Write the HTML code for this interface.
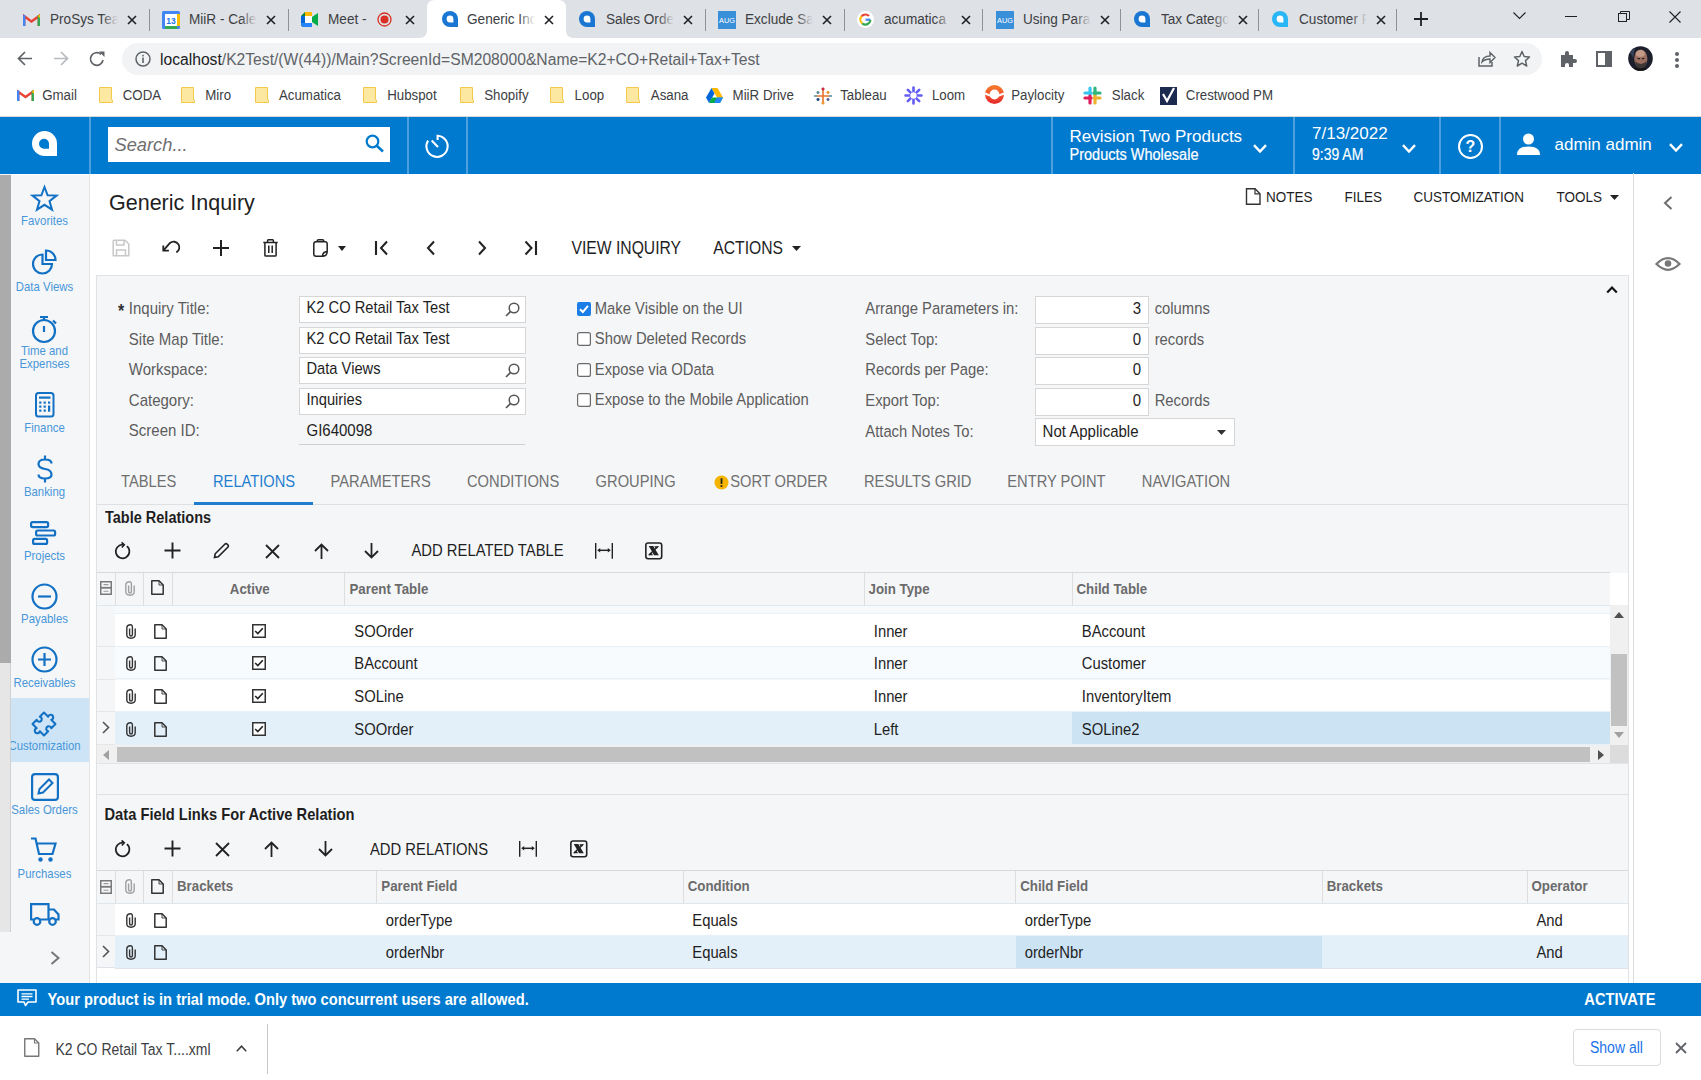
<!DOCTYPE html><html><head><meta charset="utf-8"><style>
html,body{margin:0;padding:0;}
body{width:1701px;height:1080px;overflow:hidden;position:relative;background:#fff;font-family:"Liberation Sans",sans-serif;}
.t{position:absolute;white-space:nowrap;line-height:1;}
.r{position:absolute;}
svg.r{overflow:visible;}
</style></head><body>
<div class="r" style="left:0px;top:0px;width:1701px;height:38px;background:#dee1e6;"></div>
<svg class="r" style="left:419px;top:0px;" width="155" height="38" viewBox="0 0 155 38"><path d="M0 38 Q8 38 8 30 V8 Q8 0 16 0 H139 Q147 0 147 8 V30 Q147 38 155 38 Z" fill="#fff"/></svg>
<div class="r" style="left:0px;top:38px;width:1701px;height:78px;background:#fff;"></div>
<svg class="r" style="left:23px;top:13px;" width="17" height="13" viewBox="0 0 17 13"><path d="M1.2 13V3.2L8.5 8.5L15.8 3.2V13" fill="none" stroke="#ea4335" stroke-width="2.4"/><rect x="0" y="2" width="2.4" height="11" fill="#4285f4"/><rect x="14.6" y="2" width="2.4" height="11" fill="#34a853"/><path d="M14.6 3 L17 1.5 V5 Z" fill="#fbbc04"/></svg>
<div class="r" style="left:50px;top:8px;width:68px;height:22px;overflow:hidden;"><div class="t" style="left:0;top:5.49px;font-size:13.6px;color:#3c4043;transform:scaleY(1.12);transform-origin:0 11.5px;">ProSys Tear</div><div class="r" style="right:0;top:0;width:16px;height:22px;background:linear-gradient(to right, rgba(0,0,0,0), #dee1e6);"></div></div>
<svg class="r" style="left:127px;top:15px;" width="10" height="10" viewBox="0 0 10 10"><path d="M1 1L9 9M9 1L1 9" stroke="#202124" stroke-width="1.6"/></svg>
<svg class="r" style="left:162px;top:11px;" width="18" height="18" viewBox="0 0 18 18"><rect x="0" y="0" width="18" height="18" rx="1.5" fill="#4285f4"/><rect x="3" y="3" width="12" height="12" fill="#fff"/><rect x="15" y="3" width="3" height="12" fill="#fbbc04"/><rect x="3" y="15" width="12" height="3" fill="#34a853"/><text x="9" y="13" font-size="8.5" font-family="Liberation Sans" text-anchor="middle" fill="#1a73e8" font-weight="700">13</text></svg>
<div class="r" style="left:189px;top:8px;width:68px;height:22px;overflow:hidden;"><div class="t" style="left:0;top:5.49px;font-size:13.6px;color:#3c4043;transform:scaleY(1.12);transform-origin:0 11.5px;">MiiR - Cale</div><div class="r" style="right:0;top:0;width:16px;height:22px;background:linear-gradient(to right, rgba(0,0,0,0), #dee1e6);"></div></div>
<svg class="r" style="left:266px;top:15px;" width="10" height="10" viewBox="0 0 10 10"><path d="M1 1L9 9M9 1L1 9" stroke="#202124" stroke-width="1.6"/></svg>
<svg class="r" style="left:301px;top:12px;" width="17" height="15" viewBox="0 0 17 15"><path d="M0 4 L4 0 H11 V15 H3 Q0 15 0 12 Z" fill="#00832d"/><rect x="0" y="4" width="4" height="7" fill="#0066da"/><path d="M4 0 H11 V4 H4 Z" fill="#ffba00"/><path d="M0 11 V12 Q0 15 3 15 H11 V11 Z" fill="#2684fc"/><path d="M4 4 H11 V11 H4 Z" fill="#fff"/><path d="M11 5 L17 1 V14 L11 10 Z" fill="#00ac47"/></svg>
<div class="r" style="left:328px;top:8px;width:68px;height:22px;overflow:hidden;"><div class="t" style="left:0;top:5.49px;font-size:13.6px;color:#3c4043;transform:scaleY(1.12);transform-origin:0 11.5px;">Meet -</div><div class="r" style="right:0;top:0;width:16px;height:22px;background:linear-gradient(to right, rgba(0,0,0,0), #dee1e6);"></div></div>
<svg class="r" style="left:405px;top:15px;" width="10" height="10" viewBox="0 0 10 10"><path d="M1 1L9 9M9 1L1 9" stroke="#202124" stroke-width="1.6"/></svg>
<svg class="r" style="left:377px;top:12px;" width="15" height="15" viewBox="0 0 15 15"><circle cx="7.5" cy="7.5" r="6.5" fill="none" stroke="#d93025" stroke-width="1.3"/><circle cx="7.5" cy="7.5" r="4" fill="#d93025"/></svg>
<svg class="r" style="left:441.5px;top:11px;" width="16" height="16" viewBox="0 0 16 16"><path d="M8 0 A8 8 0 0 0 0 8 A8 8 0 0 0 8 16 H16 V8 A8 8 0 0 0 8 0 Z" fill="#1976d2"/><path d="M8 4.6 A3.4 3.4 0 0 0 8 11.4 H11.4 V8 A3.4 3.4 0 0 0 8 4.6 Z" fill="#fff"/></svg>
<div class="r" style="left:467px;top:8px;width:68px;height:22px;overflow:hidden;"><div class="t" style="left:0;top:5.49px;font-size:13.6px;color:#3c4043;transform:scaleY(1.12);transform-origin:0 11.5px;">Generic Inq</div><div class="r" style="right:0;top:0;width:16px;height:22px;background:linear-gradient(to right, rgba(0,0,0,0), #fff);"></div></div>
<svg class="r" style="left:544px;top:15px;" width="10" height="10" viewBox="0 0 10 10"><path d="M1 1L9 9M9 1L1 9" stroke="#202124" stroke-width="1.6"/></svg>
<svg class="r" style="left:579px;top:11px;" width="16" height="16" viewBox="0 0 16 16"><path d="M8 0 A8 8 0 0 0 0 8 A8 8 0 0 0 8 16 H16 V8 A8 8 0 0 0 8 0 Z" fill="#1976d2"/><path d="M8 4.6 A3.4 3.4 0 0 0 8 11.4 H11.4 V8 A3.4 3.4 0 0 0 8 4.6 Z" fill="#fff"/></svg>
<div class="r" style="left:606px;top:8px;width:68px;height:22px;overflow:hidden;"><div class="t" style="left:0;top:5.49px;font-size:13.6px;color:#3c4043;transform:scaleY(1.12);transform-origin:0 11.5px;">Sales Order</div><div class="r" style="right:0;top:0;width:16px;height:22px;background:linear-gradient(to right, rgba(0,0,0,0), #dee1e6);"></div></div>
<svg class="r" style="left:683px;top:15px;" width="10" height="10" viewBox="0 0 10 10"><path d="M1 1L9 9M9 1L1 9" stroke="#202124" stroke-width="1.6"/></svg>
<svg class="r" style="left:718px;top:11px;" width="18" height="18" viewBox="0 0 18 18"><rect width="18" height="18" fill="#3a8fd9"/><text x="1" y="12" font-size="8" font-family="Liberation Sans" fill="#fff" textLength="16" lengthAdjust="spacingAndGlyphs">AUG</text></svg>
<div class="r" style="left:745px;top:8px;width:68px;height:22px;overflow:hidden;"><div class="t" style="left:0;top:5.49px;font-size:13.6px;color:#3c4043;transform:scaleY(1.12);transform-origin:0 11.5px;">Exclude Sal</div><div class="r" style="right:0;top:0;width:16px;height:22px;background:linear-gradient(to right, rgba(0,0,0,0), #dee1e6);"></div></div>
<svg class="r" style="left:822px;top:15px;" width="10" height="10" viewBox="0 0 10 10"><path d="M1 1L9 9M9 1L1 9" stroke="#202124" stroke-width="1.6"/></svg>
<svg class="r" style="left:857px;top:11px;" width="17" height="17" viewBox="0 0 17 17"><circle cx="8.5" cy="8.5" r="8.5" fill="#fff"/><path d="M13.5 8.7 H8.6" stroke="#4285f4" stroke-width="2.2"/><path d="M13.4 9 A5 5 0 0 1 5.2 12.3" fill="none" stroke="#34a853" stroke-width="2.2"/><path d="M5.2 12.3 A5 5 0 0 1 4.6 5.3" fill="none" stroke="#fbbc04" stroke-width="2.2"/><path d="M4.6 5.3 A5 5 0 0 1 12 5" fill="none" stroke="#ea4335" stroke-width="2.2"/></svg>
<div class="r" style="left:884px;top:8px;width:68px;height:22px;overflow:hidden;"><div class="t" style="left:0;top:5.49px;font-size:13.6px;color:#3c4043;transform:scaleY(1.12);transform-origin:0 11.5px;">acumatica</div><div class="r" style="right:0;top:0;width:16px;height:22px;background:linear-gradient(to right, rgba(0,0,0,0), #dee1e6);"></div></div>
<svg class="r" style="left:961px;top:15px;" width="10" height="10" viewBox="0 0 10 10"><path d="M1 1L9 9M9 1L1 9" stroke="#202124" stroke-width="1.6"/></svg>
<svg class="r" style="left:996px;top:11px;" width="18" height="18" viewBox="0 0 18 18"><rect width="18" height="18" fill="#3a8fd9"/><text x="1" y="12" font-size="8" font-family="Liberation Sans" fill="#fff" textLength="16" lengthAdjust="spacingAndGlyphs">AUG</text></svg>
<div class="r" style="left:1023px;top:8px;width:68px;height:22px;overflow:hidden;"><div class="t" style="left:0;top:5.49px;font-size:13.6px;color:#3c4043;transform:scaleY(1.12);transform-origin:0 11.5px;">Using Para</div><div class="r" style="right:0;top:0;width:16px;height:22px;background:linear-gradient(to right, rgba(0,0,0,0), #dee1e6);"></div></div>
<svg class="r" style="left:1100px;top:15px;" width="10" height="10" viewBox="0 0 10 10"><path d="M1 1L9 9M9 1L1 9" stroke="#202124" stroke-width="1.6"/></svg>
<svg class="r" style="left:1134px;top:11px;" width="16" height="16" viewBox="0 0 16 16"><path d="M8 0 A8 8 0 0 0 0 8 A8 8 0 0 0 8 16 H16 V8 A8 8 0 0 0 8 0 Z" fill="#1976d2"/><path d="M8 4.6 A3.4 3.4 0 0 0 8 11.4 H11.4 V8 A3.4 3.4 0 0 0 8 4.6 Z" fill="#fff"/></svg>
<div class="r" style="left:1161px;top:8px;width:68px;height:22px;overflow:hidden;"><div class="t" style="left:0;top:5.49px;font-size:13.6px;color:#3c4043;transform:scaleY(1.12);transform-origin:0 11.5px;">Tax Catego</div><div class="r" style="right:0;top:0;width:16px;height:22px;background:linear-gradient(to right, rgba(0,0,0,0), #dee1e6);"></div></div>
<svg class="r" style="left:1238px;top:15px;" width="10" height="10" viewBox="0 0 10 10"><path d="M1 1L9 9M9 1L1 9" stroke="#202124" stroke-width="1.6"/></svg>
<svg class="r" style="left:1272px;top:11px;" width="16" height="16" viewBox="0 0 16 16"><path d="M8 0 A8 8 0 0 0 0 8 A8 8 0 0 0 8 16 H16 V8 A8 8 0 0 0 8 0 Z" fill="#29b6f6"/><path d="M8 4.6 A3.4 3.4 0 0 0 8 11.4 H11.4 V8 A3.4 3.4 0 0 0 8 4.6 Z" fill="#fff"/></svg>
<div class="r" style="left:1299px;top:8px;width:68px;height:22px;overflow:hidden;"><div class="t" style="left:0;top:5.49px;font-size:13.6px;color:#3c4043;transform:scaleY(1.12);transform-origin:0 11.5px;">Customer F</div><div class="r" style="right:0;top:0;width:16px;height:22px;background:linear-gradient(to right, rgba(0,0,0,0), #dee1e6);"></div></div>
<svg class="r" style="left:1376px;top:15px;" width="10" height="10" viewBox="0 0 10 10"><path d="M1 1L9 9M9 1L1 9" stroke="#202124" stroke-width="1.6"/></svg>
<div class="r" style="left:149px;top:9px;width:1px;height:22px;background:#8e9196;"></div>
<div class="r" style="left:288px;top:9px;width:1px;height:22px;background:#8e9196;"></div>
<div class="r" style="left:705px;top:9px;width:1px;height:22px;background:#8e9196;"></div>
<div class="r" style="left:844px;top:9px;width:1px;height:22px;background:#8e9196;"></div>
<div class="r" style="left:982px;top:9px;width:1px;height:22px;background:#8e9196;"></div>
<div class="r" style="left:1120px;top:9px;width:1px;height:22px;background:#8e9196;"></div>
<div class="r" style="left:1258px;top:9px;width:1px;height:22px;background:#8e9196;"></div>
<div class="r" style="left:1396px;top:9px;width:1px;height:22px;background:#8e9196;"></div>
<svg class="r" style="left:1414px;top:12px;" width="14" height="14" viewBox="0 0 14 14"><path d="M7 0V14M0 7H14" stroke="#202124" stroke-width="1.8"/></svg>
<svg class="r" style="left:1513px;top:12px;" width="13" height="8" viewBox="0 0 13 8"><path d="M0.5 0.5L6.5 6.5L12.5 0.5" fill="none" stroke="#202124" stroke-width="1.1"/></svg>
<div class="r" style="left:1565px;top:16px;width:12px;height:1px;background:#202124;"></div>
<svg class="r" style="left:1618px;top:11px;" width="12" height="11" viewBox="0 0 12 11"><rect x="0.5" y="2.5" width="8" height="8" fill="none" stroke="#202124"/><path d="M2.5 2.5V0.5H11.5V8.5H8.5" fill="none" stroke="#202124"/></svg>
<svg class="r" style="left:1669px;top:11px;" width="12" height="12" viewBox="0 0 12 12"><path d="M0.5 0.5L11.5 11.5M11.5 0.5L0.5 11.5" stroke="#202124" stroke-width="1.1"/></svg>
<svg class="r" style="left:17px;top:51px;" width="16" height="15" viewBox="0 0 16 15"><path d="M15 7.5H2M8 1L1.5 7.5L8 14" fill="none" stroke="#5f6368" stroke-width="1.7"/></svg>
<svg class="r" style="left:53px;top:51px;" width="16" height="15" viewBox="0 0 16 15"><path d="M1 7.5H14M8 1L14.5 7.5L8 14" fill="none" stroke="#b7babf" stroke-width="1.7"/></svg>
<svg class="r" style="left:89px;top:51px;" width="17" height="16" viewBox="0 0 17 16"><path d="M14 9A6.3 6.3 0 1 1 12 3.3" fill="none" stroke="#5f6368" stroke-width="1.7"/><path d="M10 0.5H15.5V6Z" fill="#5f6368"/></svg>
<div class="r" style="left:122px;top:43px;width:1420px;height:32px;background:#f1f3f4;border-radius:16px;"></div>
<svg class="r" style="left:135px;top:51px;" width="16" height="16" viewBox="0 0 16 16"><circle cx="8" cy="8" r="7" fill="none" stroke="#5f6368" stroke-width="1.5"/><rect x="7.2" y="6.5" width="1.6" height="5.5" fill="#5f6368"/><rect x="7.2" y="3.8" width="1.6" height="1.6" fill="#5f6368"/></svg>
<div class="t" style="left:160px;top:51.74px;font-size:15.66px;color:#5f6368;transform:scaleY(1.1);transform-origin:0 13.26px;"><span style="color:#202124">localhost</span>/K2Test/(W(44))/Main?ScreenId=SM208000&amp;Name=K2+CO+Retail+Tax+Test</div>
<svg class="r" style="left:1478px;top:51px;" width="18" height="16" viewBox="0 0 18 16"><path d="M1 6V15H14V11" fill="none" stroke="#5f6368" stroke-width="1.5"/><path d="M4 11Q5 5 12 5V1.5L17 6.5L12 11.5V8Q7 8 4 11Z" fill="none" stroke="#5f6368" stroke-width="1.4"/></svg>
<svg class="r" style="left:1513px;top:50px;" width="18" height="18" viewBox="0 0 18 18"><path d="M9 1.5L11.2 6.5L16.5 7L12.5 10.6L13.7 16L9 13.2L4.3 16L5.5 10.6L1.5 7L6.8 6.5Z" fill="none" stroke="#5f6368" stroke-width="1.5" stroke-linejoin="round"/></svg>
<svg class="r" style="left:1559px;top:50px;" width="18" height="18" viewBox="0 0 18 18"><path d="M2 5H6V3A2 2 0 0 1 10 3V5H14V9H16A2 2 0 0 1 16 13H14V17H10V15A2 2 0 0 0 6 15V17H2Z" fill="#5f6368"/></svg>
<svg class="r" style="left:1596px;top:51px;" width="16" height="16" viewBox="0 0 16 16"><rect x="1" y="1" width="14" height="14" fill="none" stroke="#5f6368" stroke-width="2"/><rect x="9" y="1" width="6" height="14" fill="#5f6368"/></svg>
<svg class="r" style="left:1628px;top:46px;" width="25" height="25" viewBox="0 0 25 25"><defs><clipPath id="av"><circle cx="12.5" cy="12.5" r="12.3"/></clipPath></defs><g clip-path="url(#av)"><rect width="25" height="25" fill="#1b1f2b"/><path d="M2 6L7 2L5 12Z" fill="#4a5a78" opacity="0.6"/><ellipse cx="12.8" cy="12.8" rx="6.6" ry="9.2" fill="#9a6f60"/><ellipse cx="12.3" cy="7.5" rx="4.6" ry="3.6" fill="#c39a88"/><path d="M7 15Q8 22.5 12.8 23Q17.5 22.5 18.6 15Q16 18 12.8 18Q9.5 18 7 15Z" fill="#3d3634"/><rect x="9.5" y="12" width="2.5" height="1.2" fill="#2a2220"/><rect x="13.8" y="12" width="2.5" height="1.2" fill="#2a2220"/><path d="M3 25Q5 21 12.8 22.5Q20 21 22 25Z" fill="#141414"/></g></svg>
<div class="r" style="left:1674.5px;top:52px;width:4px;height:4px;border-radius:2px;background:#5f6368"></div>
<div class="r" style="left:1674.5px;top:58px;width:4px;height:4px;border-radius:2px;background:#5f6368"></div>
<div class="r" style="left:1674.5px;top:64px;width:4px;height:4px;border-radius:2px;background:#5f6368"></div>
<svg class="r" style="left:17px;top:89px;" width="17" height="12" viewBox="0 0 17 12"><path d="M1.2 12V2.8L8.5 8L15.8 2.8V12" fill="none" stroke="#ea4335" stroke-width="2.4"/><rect x="0" y="1.5" width="2.4" height="10.5" fill="#4285f4"/><rect x="14.6" y="1.5" width="2.4" height="10.5" fill="#34a853"/><path d="M14.6 2.5L17 1V5Z" fill="#fbbc04"/></svg>
<div class="t" style="left:42.20px;top:89.24px;font-size:13.3px;color:#3c4043;transform:scaleY(1.13);transform-origin:0 11.26px;">Gmail</div>
<div class="t" style="left:122.70px;top:89.24px;font-size:13.3px;color:#3c4043;transform:scaleY(1.13);transform-origin:0 11.26px;">CODA</div>
<div class="t" style="left:205.20px;top:89.24px;font-size:13.3px;color:#3c4043;transform:scaleY(1.13);transform-origin:0 11.26px;">Miro</div>
<div class="t" style="left:278.90px;top:89.24px;font-size:13.3px;color:#3c4043;transform:scaleY(1.13);transform-origin:0 11.26px;">Acumatica</div>
<div class="t" style="left:387.20px;top:89.24px;font-size:13.3px;color:#3c4043;transform:scaleY(1.13);transform-origin:0 11.26px;">Hubspot</div>
<div class="t" style="left:484.20px;top:89.24px;font-size:13.3px;color:#3c4043;transform:scaleY(1.13);transform-origin:0 11.26px;">Shopify</div>
<div class="t" style="left:574.60px;top:89.24px;font-size:13.3px;color:#3c4043;transform:scaleY(1.13);transform-origin:0 11.26px;">Loop</div>
<div class="t" style="left:650.80px;top:89.24px;font-size:13.3px;color:#3c4043;transform:scaleY(1.13);transform-origin:0 11.26px;">Asana</div>
<div class="t" style="left:732.60px;top:89.24px;font-size:13.3px;color:#3c4043;transform:scaleY(1.13);transform-origin:0 11.26px;">MiiR Drive</div>
<div class="t" style="left:840.20px;top:89.24px;font-size:13.3px;color:#3c4043;transform:scaleY(1.13);transform-origin:0 11.26px;">Tableau</div>
<div class="t" style="left:931.90px;top:89.24px;font-size:13.3px;color:#3c4043;transform:scaleY(1.13);transform-origin:0 11.26px;">Loom</div>
<div class="t" style="left:1011.20px;top:89.24px;font-size:13.3px;color:#3c4043;transform:scaleY(1.13);transform-origin:0 11.26px;">Paylocity</div>
<div class="t" style="left:1111.80px;top:89.24px;font-size:13.3px;color:#3c4043;transform:scaleY(1.13);transform-origin:0 11.26px;">Slack</div>
<div class="t" style="left:1185.80px;top:89.24px;font-size:13.3px;color:#3c4043;transform:scaleY(1.13);transform-origin:0 11.26px;">Crestwood PM</div>
<svg class="r" style="left:98.8px;top:87px;" width="14" height="16" viewBox="0 0 14 16"><path d="M0.5 0.5H12.5V12.5Q13.5 12.5 13.5 13.5V15.5H0.5Z" fill="#fce8a0" stroke="#f2c94c" stroke-width="1"/></svg>
<svg class="r" style="left:180.6px;top:87px;" width="14" height="16" viewBox="0 0 14 16"><path d="M0.5 0.5H12.5V12.5Q13.5 12.5 13.5 13.5V15.5H0.5Z" fill="#fce8a0" stroke="#f2c94c" stroke-width="1"/></svg>
<svg class="r" style="left:254.7px;top:87px;" width="14" height="16" viewBox="0 0 14 16"><path d="M0.5 0.5H12.5V12.5Q13.5 12.5 13.5 13.5V15.5H0.5Z" fill="#fce8a0" stroke="#f2c94c" stroke-width="1"/></svg>
<svg class="r" style="left:363.3px;top:87px;" width="14" height="16" viewBox="0 0 14 16"><path d="M0.5 0.5H12.5V12.5Q13.5 12.5 13.5 13.5V15.5H0.5Z" fill="#fce8a0" stroke="#f2c94c" stroke-width="1"/></svg>
<svg class="r" style="left:460px;top:87px;" width="14" height="16" viewBox="0 0 14 16"><path d="M0.5 0.5H12.5V12.5Q13.5 12.5 13.5 13.5V15.5H0.5Z" fill="#fce8a0" stroke="#f2c94c" stroke-width="1"/></svg>
<svg class="r" style="left:550px;top:87px;" width="14" height="16" viewBox="0 0 14 16"><path d="M0.5 0.5H12.5V12.5Q13.5 12.5 13.5 13.5V15.5H0.5Z" fill="#fce8a0" stroke="#f2c94c" stroke-width="1"/></svg>
<svg class="r" style="left:625.8px;top:87px;" width="14" height="16" viewBox="0 0 14 16"><path d="M0.5 0.5H12.5V12.5Q13.5 12.5 13.5 13.5V15.5H0.5Z" fill="#fce8a0" stroke="#f2c94c" stroke-width="1"/></svg>
<svg class="r" style="left:706px;top:88px;" width="17" height="15" viewBox="0 0 17 15"><path d="M5.5 0H11.5L17 9.5H11Z" fill="#ffba00"/><path d="M5.5 0L0 9.5L3 15L8.5 5.5Z" fill="#0066da"/><path d="M3 15H14L17 9.5H6Z" fill="#00ac47"/><path d="M11 9.5H17L14 15H8Z" fill="#2684fc"/></svg>
<svg class="r" style="left:814px;top:87px;" width="18" height="18" viewBox="0 0 18 18"><g stroke-width="1.6"><path d="M9 3V15M3 9H15" stroke="#e8762d"/><path d="M9 0.5V3.5M7.5 2H10.5" stroke="#c72035"/><path d="M4 4V7M2.5 5.5H5.5" stroke="#5b879b"/><path d="M14 4V7M12.5 5.5H15.5" stroke="#eb912c"/><path d="M4 11V14M2.5 12.5H5.5" stroke="#1f447e"/><path d="M14 11V14M12.5 12.5H15.5" stroke="#5c6692"/><path d="M9 14.5V17.5M7.5 16H10.5" stroke="#eb912c"/><path d="M0 9H3M15 9H18" stroke="#59879b"/></g></svg>
<svg class="r" style="left:904px;top:86px;" width="19" height="19" viewBox="0 0 19 19"><g stroke="#625df5" stroke-width="2.6" stroke-linecap="round"><path d="M9.5 1.5V17.5M1.5 9.5H17.5M3.8 3.8L15.2 15.2M15.2 3.8L3.8 15.2"/></g><circle cx="9.5" cy="9.5" r="3.2" fill="#fff"/></svg>
<svg class="r" style="left:985px;top:85px;" width="19" height="19" viewBox="0 0 19 19"><defs><linearGradient id="pg" x1="0" y1="0" x2="0" y2="1"><stop offset="0" stop-color="#f7762b"/><stop offset="1" stop-color="#e8322c"/></linearGradient></defs><circle cx="9.5" cy="9.5" r="7.2" fill="none" stroke="url(#pg)" stroke-width="4.6"/><path d="M0 8.5L5 10.5M19 8.5L14 10.5" stroke="#fff" stroke-width="2.2"/></svg>
<svg class="r" style="left:1083px;top:86px;" width="19" height="19" viewBox="0 0 19 19"><g stroke-linecap="round" stroke-width="3.2"><path d="M7 2V9" stroke="#36c5f0"/><path d="M2 7H8" stroke="#36c5f0"/><path d="M12 2V9" stroke="#2eb67d"/><path d="M11 7H17" stroke="#2eb67d"/><path d="M12 10V17" stroke="#ecb22e"/><path d="M11 12H17" stroke="#ecb22e"/><path d="M7 10V17" stroke="#e01e5a"/><path d="M2 12H8" stroke="#e01e5a"/></g></svg>
<svg class="r" style="left:1160px;top:86px;" width="17" height="19" viewBox="0 0 17 19"><path d="M0 1H17V19H0Z" fill="#1b2a4e"/><path d="M3 8L7 15L14 2" fill="none" stroke="#fff" stroke-width="2.2"/></svg>
<div class="r" style="left:0px;top:116px;width:1701px;height:1px;background:#d8d8d8;"></div>
<div class="r" style="left:0px;top:117px;width:1701px;height:57px;background:#007acf;"></div>
<div class="r" style="left:89px;top:117px;width:2px;height:57px;background:#4e9fdd;"></div>
<div class="r" style="left:407px;top:117px;width:2px;height:57px;background:#4e9fdd;"></div>
<div class="r" style="left:466px;top:117px;width:2px;height:57px;background:#4e9fdd;"></div>
<div class="r" style="left:1051px;top:117px;width:2px;height:57px;background:#4e9fdd;"></div>
<div class="r" style="left:1293px;top:117px;width:2px;height:57px;background:#4e9fdd;"></div>
<div class="r" style="left:1439px;top:117px;width:2px;height:57px;background:#4e9fdd;"></div>
<div class="r" style="left:1499px;top:117px;width:2px;height:57px;background:#4e9fdd;"></div>
<svg class="r" style="left:32px;top:131px;" width="25" height="25" viewBox="0 0 25 25"><path d="M12.5 0A12.5 12.5 0 0 0 0 12.5A12.5 12.5 0 0 0 12.5 25H25V12.5A12.5 12.5 0 0 0 12.5 0Z" fill="#fff"/><path d="M12 7.8A5 5 0 0 0 12 17.8H17V12.8A5 5 0 0 0 12 7.8Z" fill="#007acf"/></svg>
<div class="r" style="left:108px;top:127px;width:282px;height:35px;background:#fff;"></div>
<div class="t" style="left:114.50px;top:135.51px;font-size:18.3px;color:#6f6f6f;font-style:italic;">Search...</div>
<svg class="r" style="left:365px;top:134px;" width="20" height="18" viewBox="0 0 20 18"><circle cx="7.5" cy="7.5" r="5.8" fill="none" stroke="#007acf" stroke-width="2.2"/><path d="M11.5 11.5L18 17.5" stroke="#007acf" stroke-width="2.6"/></svg>
<svg class="r" style="left:424px;top:133px;" width="27" height="27" viewBox="0 0 27 27"><path d="M4.1 7.6A10.6 10.6 0 1 0 13.6 2.7V7" fill="none" stroke="#fff" stroke-width="2.1"/><path d="M7.7 7.6L14 13.9" stroke="#fff" stroke-width="2.1"/></svg>
<div class="t" style="left:1069.50px;top:127.91px;font-size:17px;color:#fff;">Revision Two Products</div>
<div class="t" style="left:1069.50px;top:148.03px;font-size:14.5px;color:#fff;transform:scaleY(1.13);transform-origin:0 12.27px;-webkit-text-stroke:0.2px #fff;">Products Wholesale</div>
<svg class="r" style="left:1253px;top:143.5px;" width="14" height="9" viewBox="0 0 14 9"><path d="M1 1.2L7.0 7.5L13 1.2" fill="none" stroke="#fff" stroke-width="2.4"/></svg>
<div class="t" style="left:1312.00px;top:125.11px;font-size:17px;color:#fff;">7/13/2022</div>
<div class="t" style="left:1312.00px;top:148.45px;font-size:14px;color:#fff;transform:scaleY(1.13);transform-origin:0 11.85px;-webkit-text-stroke:0.15px #fff;">9:39 AM</div>
<svg class="r" style="left:1402px;top:143.5px;" width="14" height="9" viewBox="0 0 14 9"><path d="M1 1.2L7.0 7.5L13 1.2" fill="none" stroke="#fff" stroke-width="2.4"/></svg>
<svg class="r" style="left:1457px;top:133px;" width="27" height="27" viewBox="0 0 27 27"><circle cx="13.5" cy="13.5" r="11.5" fill="none" stroke="#fff" stroke-width="2"/><text x="13.5" y="19.3" font-size="16" font-family="Liberation Sans" font-weight="700" text-anchor="middle" fill="#fff">?</text></svg>
<svg class="r" style="left:1517px;top:133px;" width="23" height="23" viewBox="0 0 23 23"><circle cx="11.5" cy="6" r="5.5" fill="#fff"/><path d="M0 22Q0 13.5 11.5 13.5Q23 13.5 23 22Z" fill="#fff"/></svg>
<div class="t" style="left:1554.50px;top:135.61px;font-size:17px;color:#fff;">admin admin</div>
<svg class="r" style="left:1669px;top:142.5px;" width="14" height="9" viewBox="0 0 14 9"><path d="M1 1.2L7.0 7.5L13 1.2" fill="none" stroke="#fff" stroke-width="2.4"/></svg>
<div class="r" style="left:0px;top:174px;width:90px;height:809px;background:#f5f6f8;"></div>
<div class="r" style="left:89px;top:174px;width:1px;height:809px;background:#e2e4e7;"></div>
<div class="r" style="left:11px;top:174px;width:78px;height:1px;background:#fff;"></div>
<div class="r" style="left:11px;top:698px;width:78px;height:64px;background:#cde4f6;"></div>
<svg class="r" style="left:31px;top:185px;" width="27" height="27" viewBox="0 0 27 27"><path d="M13.5 2L16.6 10.3L25.5 10.6L18.5 16.1L21 24.7L13.5 19.8L6 24.7L8.5 16.1L1.5 10.6L10.4 10.3Z" fill="none" stroke="#1271c4" stroke-width="2" stroke-linejoin="miter"/></svg>
<div class="t" style="left:4.5px;width:80px;text-align:center;top:215.85px;font-size:11.4px;color:#4897d8;transform:scaleY(1.07);transform-origin:0 9.65px;">Favorites</div>
<svg class="r" style="left:31px;top:248px;" width="28" height="28" viewBox="0 0 28 28"><path d="M11.5 6.5A9.5 9.5 0 1 0 21 16H11.5Z" fill="none" stroke="#1271c4" stroke-width="2.2"/><path d="M15 2.5A9.5 9.5 0 0 1 24.5 12H15Z" fill="none" stroke="#1271c4" stroke-width="2.2"/></svg>
<div class="t" style="left:4.5px;width:80px;text-align:center;top:282.35px;font-size:11.4px;color:#4897d8;transform:scaleY(1.07);transform-origin:0 9.65px;">Data Views</div>
<svg class="r" style="left:31px;top:315px;" width="28" height="29" viewBox="0 0 28 29"><circle cx="13" cy="16" r="11" fill="none" stroke="#1271c4" stroke-width="2.2"/><path d="M9 2H17M13 2V5M13 11V17M22 5.5L25 8.5" stroke="#1271c4" stroke-width="2.2"/></svg>
<div class="t" style="left:4.5px;width:80px;text-align:center;top:346.35px;font-size:11.4px;color:#4897d8;transform:scaleY(1.07);transform-origin:0 9.65px;">Time and</div>
<div class="t" style="left:4.5px;width:80px;text-align:center;top:359.35px;font-size:11.4px;color:#4897d8;transform:scaleY(1.07);transform-origin:0 9.65px;">Expenses</div>
<svg class="r" style="left:35px;top:392px;" width="20" height="26" viewBox="0 0 20 26"><rect x="1" y="1" width="17.5" height="23.5" rx="2.5" fill="none" stroke="#1271c4" stroke-width="2"/><rect x="4" y="4.5" width="11.5" height="2.2" fill="#1271c4"/><g fill="#1271c4"><rect x="4.2" y="9.5" width="2.2" height="2.2"/><rect x="8.6" y="9.5" width="2.2" height="2.2"/><rect x="13" y="9.5" width="2.2" height="2.2"/><rect x="4.2" y="13.5" width="2.2" height="2.2"/><rect x="8.6" y="13.5" width="2.2" height="2.2"/><rect x="13" y="13.5" width="2.2" height="6.2"/><rect x="4.2" y="17.5" width="2.2" height="2.2"/><rect x="8.6" y="17.5" width="2.2" height="2.2"/></g></svg>
<div class="t" style="left:4.5px;width:80px;text-align:center;top:422.85px;font-size:11.4px;color:#4897d8;transform:scaleY(1.07);transform-origin:0 9.65px;">Finance</div>
<svg class="r" style="left:35px;top:455px;" width="20" height="28" viewBox="0 0 20 28"><path d="M16.5 8.5Q16.5 4.5 10 4.5Q3.5 4.5 3.5 9Q3.5 13 10 14Q16.5 15 16.5 19.5Q16.5 23.5 10 23.5Q3.5 23.5 3.5 19.5M10 0.5V4.5M10 23.5V27.5" fill="none" stroke="#1271c4" stroke-width="2.2"/></svg>
<div class="t" style="left:4.5px;width:80px;text-align:center;top:486.85px;font-size:11.4px;color:#4897d8;transform:scaleY(1.07);transform-origin:0 9.65px;">Banking</div>
<svg class="r" style="left:30px;top:521px;" width="30" height="24" viewBox="0 0 30 24"><rect x="1.1" y="1.1" width="17" height="5" rx="1.5" fill="none" stroke="#1271c4" stroke-width="2.2"/><rect x="6.1" y="9.5" width="19" height="5" rx="1.5" fill="none" stroke="#1271c4" stroke-width="2.2"/><rect x="3.1" y="17.9" width="14" height="5" rx="1.5" fill="none" stroke="#1271c4" stroke-width="2.2"/></svg>
<div class="t" style="left:4.5px;width:80px;text-align:center;top:551.35px;font-size:11.4px;color:#4897d8;transform:scaleY(1.07);transform-origin:0 9.65px;">Projects</div>
<svg class="r" style="left:31px;top:583px;" width="27" height="27" viewBox="0 0 27 27"><circle cx="13.5" cy="13.5" r="12" fill="none" stroke="#1271c4" stroke-width="2.2"/><path d="M7 13.5H20" stroke="#1271c4" stroke-width="2.2"/></svg>
<div class="t" style="left:4.5px;width:80px;text-align:center;top:613.85px;font-size:11.4px;color:#4897d8;transform:scaleY(1.07);transform-origin:0 9.65px;">Payables</div>
<svg class="r" style="left:31px;top:646px;" width="27" height="27" viewBox="0 0 27 27"><circle cx="13.5" cy="13.5" r="12" fill="none" stroke="#1271c4" stroke-width="2.2"/><path d="M7 13.5H20M13.5 7V20" stroke="#1271c4" stroke-width="2.2"/></svg>
<div class="t" style="left:4.5px;width:80px;text-align:center;top:677.85px;font-size:11.4px;color:#4897d8;transform:scaleY(1.07);transform-origin:0 9.65px;">Receivables</div>
<svg class="r" style="left:30.3px;top:709.7px;" width="28" height="28" viewBox="0 0 28 28"><g transform="translate(14 14) rotate(45) scale(1.45)"><path d="M-5.6 -5.6H-1.5A1.75 1.75 0 1 1 1.5 -5.6H5.6V-1.5A1.75 1.75 0 1 0 5.6 1.5V5.6H1.5A1.75 1.75 0 1 1 -1.5 5.6H-5.6V1.5A1.75 1.75 0 1 0 -5.6 -1.5Z" fill="none" stroke="#1271c4" stroke-width="1.4" stroke-linejoin="round"/></g></svg>
<div class="t" style="left:4.5px;width:80px;text-align:center;top:741.35px;font-size:11.4px;color:#4897d8;transform:scaleY(1.07);transform-origin:0 9.65px;">Customization</div>
<svg class="r" style="left:31px;top:773px;" width="28" height="28" viewBox="0 0 28 28"><rect x="1.1" y="1.1" width="25.8" height="25.8" rx="3" fill="none" stroke="#1271c4" stroke-width="2.2"/><path d="M7.5 20.5L8.5 16L18 6.5L21.5 10L12 19.5Z" fill="none" stroke="#1271c4" stroke-width="2"/></svg>
<div class="t" style="left:4.5px;width:80px;text-align:center;top:805.35px;font-size:11.4px;color:#4897d8;transform:scaleY(1.07);transform-origin:0 9.65px;">Sales Orders</div>
<svg class="r" style="left:30px;top:837px;" width="28" height="26" viewBox="0 0 28 26"><path d="M1 1.5H5.5L9 17H22.5L25.5 6.5H7" fill="none" stroke="#1271c4" stroke-width="2.2"/><circle cx="10.5" cy="22.5" r="2.2" fill="#1271c4"/><circle cx="20.5" cy="22.5" r="2.2" fill="#1271c4"/></svg>
<div class="t" style="left:4.5px;width:80px;text-align:center;top:869.35px;font-size:11.4px;color:#4897d8;transform:scaleY(1.07);transform-origin:0 9.65px;">Purchases</div>
<svg class="r" style="left:30px;top:902px;" width="30" height="24" viewBox="0 0 30 24"><path d="M1.1 2.1H18.5V17.5H1.1Z" fill="none" stroke="#1271c4" stroke-width="2.2"/><path d="M18.5 7.5H24L28.5 12.5V17.5H18.5" fill="none" stroke="#1271c4" stroke-width="2.2"/><circle cx="7" cy="19.5" r="3.3" fill="#f5f6f8" stroke="#1271c4" stroke-width="2.2"/><circle cx="22.5" cy="19.5" r="3.3" fill="#f5f6f8" stroke="#1271c4" stroke-width="2.2"/></svg>
<div class="r" style="left:0px;top:175px;width:11px;height:488px;background:#ababab;"></div>
<div class="r" style="left:0px;top:663px;width:11px;height:269px;background:#e6e6e6;"></div>
<div class="r" style="left:10px;top:663px;width:1px;height:269px;background:#d0d0d0;"></div>
<svg class="r" style="left:50px;top:951px;" width="11" height="14" viewBox="0 0 11 14"><path d="M1.5 1L8.5 7L1.5 13" fill="none" stroke="#777" stroke-width="2"/></svg>
<div class="r" style="left:1633px;top:173px;width:1px;height:810px;background:#dcdcdc;"></div>
<svg class="r" style="left:1663px;top:196px;" width="10" height="14" viewBox="0 0 10 14"><path d="M8.5 1L2 7L8.5 13" fill="none" stroke="#6e6e6e" stroke-width="2"/></svg>
<svg class="r" style="left:1655px;top:255px;" width="26" height="18" viewBox="0 0 26 18"><path d="M1.5 9Q13 -2.5 24.5 9Q13 20.5 1.5 9Z" fill="none" stroke="#777" stroke-width="2.2"/><circle cx="13" cy="8.5" r="3.3" fill="#777"/></svg>
<div class="t" style="left:109.00px;top:192.70px;font-size:21.5px;color:#1e1e1e;">Generic Inquiry</div>
<svg class="r" style="left:1245px;top:188px;" width="17" height="17" viewBox="0 0 17 17"><path d="M1.5 0.8H10L15 5.8V16.2H1.5Z" fill="none" stroke="#333" stroke-width="1.4"/><path d="M10 0.8V5.8H15" fill="none" stroke="#333" stroke-width="1.2"/></svg>
<div class="t" style="left:1266.00px;top:190.87px;font-size:13.5px;color:#1e1e1e;transform:scaleY(1.13);transform-origin:0 11.43px;">NOTES</div>
<div class="t" style="left:1344.50px;top:190.87px;font-size:13.5px;color:#1e1e1e;transform:scaleY(1.13);transform-origin:0 11.43px;">FILES</div>
<div class="t" style="left:1413.50px;top:190.87px;font-size:13.5px;color:#1e1e1e;transform:scaleY(1.13);transform-origin:0 11.43px;">CUSTOMIZATION</div>
<div class="t" style="left:1556.50px;top:190.87px;font-size:13.5px;color:#1e1e1e;transform:scaleY(1.13);transform-origin:0 11.43px;">TOOLS</div>
<svg class="r" style="left:1610px;top:194.5px;" width="9" height="5" viewBox="0 0 9 5"><path d="M0 0H9L4.5 5Z" fill="#222"/></svg>
<svg class="r" style="left:112px;top:239px;" width="18" height="18" viewBox="0 0 18 18"><path d="M2 1.2H13L16.8 5V16.8H1.2V2Z" fill="none" stroke="#c8c8c8" stroke-width="1.5" stroke-linejoin="round"/><path d="M4.5 1.2V6H12V1.2M4.5 16.8V11H13.5V16.8" fill="none" stroke="#c8c8c8" stroke-width="1.5"/></svg>
<svg class="r" style="left:161px;top:239px;" width="20" height="17" viewBox="0 0 20 17"><path d="M2.5 11.3L9.0 4.0A5.7 5.7 0 1 1 15.35 13.4" fill="none" stroke="#222" stroke-width="1.8"/><path d="M2.3 6.6V11.6H7.9" fill="none" stroke="#222" stroke-width="1.8"/></svg>
<svg class="r" style="left:212px;top:239px;" width="18" height="18" viewBox="0 0 18 18"><path d="M9 1V17M1 9H17" stroke="#222" stroke-width="2"/></svg>
<svg class="r" style="left:263px;top:239px;" width="15" height="18" viewBox="0 0 15 18"><path d="M0.3 3.6H14.7M4.6 3.6V1.6Q4.6 0.8 5.4 0.8H9.6Q10.4 0.8 10.4 1.6V3.6M1.9 3.6V16.2Q1.9 17.1 2.8 17.1H12.2Q13.1 17.1 13.1 16.2V3.6M5.8 6.5V14M9.2 6.5V14" fill="none" stroke="#222" stroke-width="1.5"/></svg>
<svg class="r" style="left:313px;top:239px;" width="16" height="18" viewBox="0 0 16 18"><path d="M9.5 17.2H3Q0.8 17.2 0.8 15V5Q0.8 2.8 3 2.8H12Q14.2 2.8 14.2 5V12.5Q14.2 17.2 9.5 17.2Q9.5 13 14.2 12.5M4.2 2.8V2Q4.2 0.8 5.6 0.8H9.4Q10.8 0.8 10.8 2V2.8" fill="none" stroke="#222" stroke-width="1.5"/></svg>
<svg class="r" style="left:337.5px;top:245.5px;" width="8" height="5" viewBox="0 0 8 5"><path d="M0 0H8L4 5Z" fill="#222"/></svg>
<svg class="r" style="left:374px;top:240px;" width="16" height="16" viewBox="0 0 16 16"><path d="M2 1V15" stroke="#222" stroke-width="2.1"/><path d="M13 1.5L7 8L13 14.5" fill="none" stroke="#222" stroke-width="2"/></svg>
<svg class="r" style="left:426px;top:240px;" width="10" height="16" viewBox="0 0 10 16"><path d="M8 1.5L2 8L8 14.5" fill="none" stroke="#222" stroke-width="2"/></svg>
<svg class="r" style="left:477px;top:240px;" width="10" height="16" viewBox="0 0 10 16"><path d="M2 1.5L8 8L2 14.5" fill="none" stroke="#222" stroke-width="2"/></svg>
<svg class="r" style="left:523px;top:240px;" width="16" height="16" viewBox="0 0 16 16"><path d="M13 1V15" stroke="#222" stroke-width="2.1"/><path d="M2.5 1.5L8.5 8L2.5 14.5" fill="none" stroke="#222" stroke-width="2"/></svg>
<div class="t" style="left:571.50px;top:241.21px;font-size:15.7px;color:#1e1e1e;transform:scaleY(1.13);transform-origin:0 13.29px;">VIEW INQUIRY</div>
<div class="t" style="left:713.30px;top:241.21px;font-size:15.7px;color:#1e1e1e;transform:scaleY(1.13);transform-origin:0 13.29px;">ACTIONS</div>
<svg class="r" style="left:791.5px;top:245.5px;" width="9" height="5" viewBox="0 0 9 5"><path d="M0 0H9L4.5 5Z" fill="#222"/></svg>
<div class="r" style="left:96px;top:274.5px;width:1531px;height:720px;background:#f5f6f8;border:1px solid #e0e2e5;"></div>
<svg class="r" style="left:1606px;top:285px;" width="12" height="9" viewBox="0 0 12 9"><path d="M1.2 7.5L6 2.5L10.8 7.5" fill="none" stroke="#111" stroke-width="2.2"/></svg>
<div class="t" style="left:118.00px;top:304.46px;font-size:16px;color:#333;transform:scaleY(1.13);transform-origin:0 13.54px;font-weight:700;">*</div>
<div class="t" style="left:128.80px;top:301.00px;font-size:15px;color:#5c5c5c;transform:scaleY(1.13);transform-origin:0 12.70px;">Inquiry Title:</div>
<div class="t" style="left:128.80px;top:331.80px;font-size:15px;color:#5c5c5c;transform:scaleY(1.13);transform-origin:0 12.70px;">Site Map Title:</div>
<div class="t" style="left:128.80px;top:362.10px;font-size:15px;color:#5c5c5c;transform:scaleY(1.13);transform-origin:0 12.70px;">Workspace:</div>
<div class="t" style="left:128.80px;top:392.60px;font-size:15px;color:#5c5c5c;transform:scaleY(1.13);transform-origin:0 12.70px;">Category:</div>
<div class="t" style="left:128.80px;top:423.30px;font-size:15px;color:#5c5c5c;transform:scaleY(1.13);transform-origin:0 12.70px;">Screen ID:</div>
<div class="r" style="left:299px;top:296px;width:225px;height:25px;background:#fff;border:1px solid #d6d6d6;"></div>
<div class="t" style="left:306.50px;top:301.36px;font-size:14.7px;color:#1e1e1e;transform:scaleY(1.13);transform-origin:0 12.44px;">K2 CO Retail Tax Test</div>
<svg class="r" style="left:505px;top:302px;" width="15" height="15" viewBox="0 0 15 15"><circle cx="9" cy="6" r="4.8" fill="none" stroke="#555" stroke-width="1.5"/><path d="M5.6 9.4L1 14" stroke="#555" stroke-width="1.6"/></svg>
<div class="r" style="left:299px;top:327px;width:225px;height:25px;background:#fff;border:1px solid #d6d6d6;"></div>
<div class="t" style="left:306.50px;top:332.36px;font-size:14.7px;color:#1e1e1e;transform:scaleY(1.13);transform-origin:0 12.44px;">K2 CO Retail Tax Test</div>
<div class="r" style="left:299px;top:357px;width:225px;height:25px;background:#fff;border:1px solid #d6d6d6;"></div>
<div class="t" style="left:306.50px;top:362.36px;font-size:14.7px;color:#1e1e1e;transform:scaleY(1.13);transform-origin:0 12.44px;">Data Views</div>
<svg class="r" style="left:505px;top:363px;" width="15" height="15" viewBox="0 0 15 15"><circle cx="9" cy="6" r="4.8" fill="none" stroke="#555" stroke-width="1.5"/><path d="M5.6 9.4L1 14" stroke="#555" stroke-width="1.6"/></svg>
<div class="r" style="left:299px;top:388px;width:225px;height:25px;background:#fff;border:1px solid #d6d6d6;"></div>
<div class="t" style="left:306.50px;top:393.36px;font-size:14.7px;color:#1e1e1e;transform:scaleY(1.13);transform-origin:0 12.44px;">Inquiries</div>
<svg class="r" style="left:505px;top:394px;" width="15" height="15" viewBox="0 0 15 15"><circle cx="9" cy="6" r="4.8" fill="none" stroke="#555" stroke-width="1.5"/><path d="M5.6 9.4L1 14" stroke="#555" stroke-width="1.6"/></svg>
<div class="t" style="left:306.50px;top:423.30px;font-size:15px;color:#1e1e1e;transform:scaleY(1.13);transform-origin:0 12.70px;">GI640098</div>
<div class="r" style="left:299px;top:444px;width:226px;height:1px;background:#cfcfcf;"></div>
<svg class="r" style="left:577px;top:302px;" width="14" height="14" viewBox="0 0 14 14"><rect x="0" y="0" width="14" height="14" rx="2" fill="#1a7ee6"/><path d="M3 7.2L5.9 10L11 3.8" fill="none" stroke="#fff" stroke-width="2"/></svg>
<div class="t" style="left:594.80px;top:302.27px;font-size:14.8px;color:#5c5c5c;transform:scaleY(1.13);transform-origin:0 12.53px;">Make Visible on the UI</div>
<svg class="r" style="left:577px;top:332px;" width="14" height="14" viewBox="0 0 14 14"><rect x="0.6" y="0.6" width="12.8" height="12.8" rx="2" fill="#fff" stroke="#6a6a6a" stroke-width="1.2"/></svg>
<div class="t" style="left:594.80px;top:332.27px;font-size:14.8px;color:#5c5c5c;transform:scaleY(1.13);transform-origin:0 12.53px;">Show Deleted Records</div>
<svg class="r" style="left:577px;top:363px;" width="14" height="14" viewBox="0 0 14 14"><rect x="0.6" y="0.6" width="12.8" height="12.8" rx="2" fill="#fff" stroke="#6a6a6a" stroke-width="1.2"/></svg>
<div class="t" style="left:594.80px;top:363.27px;font-size:14.8px;color:#5c5c5c;transform:scaleY(1.13);transform-origin:0 12.53px;">Expose via OData</div>
<svg class="r" style="left:577px;top:393px;" width="14" height="14" viewBox="0 0 14 14"><rect x="0.6" y="0.6" width="12.8" height="12.8" rx="2" fill="#fff" stroke="#6a6a6a" stroke-width="1.2"/></svg>
<div class="t" style="left:594.80px;top:393.27px;font-size:14.8px;color:#5c5c5c;transform:scaleY(1.13);transform-origin:0 12.53px;">Expose to the Mobile Application</div>
<div class="t" style="left:865.30px;top:302.17px;font-size:14.8px;color:#5c5c5c;transform:scaleY(1.13);transform-origin:0 12.53px;">Arrange Parameters in:</div>
<div class="t" style="left:865.30px;top:332.77px;font-size:14.8px;color:#5c5c5c;transform:scaleY(1.13);transform-origin:0 12.53px;">Select Top:</div>
<div class="t" style="left:865.30px;top:363.27px;font-size:14.8px;color:#5c5c5c;transform:scaleY(1.13);transform-origin:0 12.53px;">Records per Page:</div>
<div class="t" style="left:865.30px;top:393.77px;font-size:14.8px;color:#5c5c5c;transform:scaleY(1.13);transform-origin:0 12.53px;">Export Top:</div>
<div class="t" style="left:865.30px;top:424.67px;font-size:14.8px;color:#5c5c5c;transform:scaleY(1.13);transform-origin:0 12.53px;">Attach Notes To:</div>
<div class="r" style="left:1035px;top:295.5px;width:112px;height:26px;background:#fff;border:1px solid #d6d6d6;"></div>
<div class="t" style="left:1035px;width:106px;text-align:right;top:301.30px;font-size:15px;color:#1e1e1e;transform:scaleY(1.13);transform-origin:0 12.7px;">3</div>
<div class="t" style="left:1154.70px;top:302.47px;font-size:14.8px;color:#5c5c5c;transform:scaleY(1.13);transform-origin:0 12.53px;">columns</div>
<div class="r" style="left:1035px;top:326.5px;width:112px;height:26px;background:#fff;border:1px solid #d6d6d6;"></div>
<div class="t" style="left:1035px;width:106px;text-align:right;top:332.30px;font-size:15px;color:#1e1e1e;transform:scaleY(1.13);transform-origin:0 12.7px;">0</div>
<div class="t" style="left:1154.70px;top:333.47px;font-size:14.8px;color:#5c5c5c;transform:scaleY(1.13);transform-origin:0 12.53px;">records</div>
<div class="r" style="left:1035px;top:356.5px;width:112px;height:26px;background:#fff;border:1px solid #d6d6d6;"></div>
<div class="t" style="left:1035px;width:106px;text-align:right;top:362.30px;font-size:15px;color:#1e1e1e;transform:scaleY(1.13);transform-origin:0 12.7px;">0</div>
<div class="r" style="left:1035px;top:387.5px;width:112px;height:26px;background:#fff;border:1px solid #d6d6d6;"></div>
<div class="t" style="left:1035px;width:106px;text-align:right;top:393.30px;font-size:15px;color:#1e1e1e;transform:scaleY(1.13);transform-origin:0 12.7px;">0</div>
<div class="t" style="left:1154.70px;top:394.47px;font-size:14.8px;color:#5c5c5c;transform:scaleY(1.13);transform-origin:0 12.53px;">Records</div>
<div class="r" style="left:1035px;top:417.5px;width:198px;height:26px;background:#fff;border:1px solid #d6d6d6;"></div>
<div class="t" style="left:1042.60px;top:423.80px;font-size:15px;color:#1e1e1e;transform:scaleY(1.13);transform-origin:0 12.70px;">Not Applicable</div>
<svg class="r" style="left:1216.5px;top:429.5px;" width="9" height="5" viewBox="0 0 9 5"><path d="M0 0H9L4.5 5Z" fill="#333"/></svg>
<div class="t" style="left:121.00px;top:474.76px;font-size:14.7px;color:#6f6f6f;transform:scaleY(1.13);transform-origin:0 12.44px;">TABLES</div>
<div class="t" style="left:213.00px;top:474.76px;font-size:14.7px;color:#1f7dd0;transform:scaleY(1.13);transform-origin:0 12.44px;">RELATIONS</div>
<div class="t" style="left:330.60px;top:474.76px;font-size:14.7px;color:#6f6f6f;transform:scaleY(1.13);transform-origin:0 12.44px;">PARAMETERS</div>
<div class="t" style="left:467.00px;top:474.76px;font-size:14.7px;color:#6f6f6f;transform:scaleY(1.13);transform-origin:0 12.44px;">CONDITIONS</div>
<div class="t" style="left:595.60px;top:474.76px;font-size:14.7px;color:#6f6f6f;transform:scaleY(1.13);transform-origin:0 12.44px;">GROUPING</div>
<div class="t" style="left:730.20px;top:474.76px;font-size:14.7px;color:#6f6f6f;transform:scaleY(1.13);transform-origin:0 12.44px;">SORT ORDER</div>
<div class="t" style="left:864.00px;top:474.76px;font-size:14.7px;color:#6f6f6f;transform:scaleY(1.13);transform-origin:0 12.44px;">RESULTS GRID</div>
<div class="t" style="left:1007.30px;top:474.76px;font-size:14.7px;color:#6f6f6f;transform:scaleY(1.13);transform-origin:0 12.44px;">ENTRY POINT</div>
<div class="t" style="left:1141.80px;top:474.76px;font-size:14.7px;color:#6f6f6f;transform:scaleY(1.13);transform-origin:0 12.44px;">NAVIGATION</div>
<svg class="r" style="left:714px;top:475px;" width="15" height="15" viewBox="0 0 15 15"><circle cx="7.5" cy="7.5" r="7" fill="#f5b400"/><rect x="6.6" y="3.3" width="1.8" height="5.6" fill="#222"/><rect x="6.6" y="10.2" width="1.8" height="1.8" fill="#222"/></svg>
<div class="r" style="left:97px;top:504px;width:1531px;height:1px;background:#dfe0e4;"></div>
<div class="r" style="left:194px;top:501.5px;width:119px;height:3px;background:#1f7dd0;"></div>
<div class="t" style="left:105.00px;top:510.93px;font-size:14.5px;color:#1e1e1e;transform:scaleY(1.13);transform-origin:0 12.27px;font-weight:700;">Table Relations</div>
<svg class="r" style="left:114.5px;top:542px;" width="17" height="17" viewBox="0 0 17 17"><path d="M11.9 4.2A6.8 6.8 0 1 1 8.3 2.7" fill="none" stroke="#222" stroke-width="1.7"/><path d="M6.6 0.3L9.3 2.8L6.8 5.5" fill="none" stroke="#222" stroke-width="1.6"/></svg>
<svg class="r" style="left:163.5px;top:542px;" width="17" height="17" viewBox="0 0 17 17"><path d="M8.5 0.5V16.5M0.5 8.5H16.5" stroke="#222" stroke-width="1.9"/></svg>
<svg class="r" style="left:213px;top:542px;" width="17" height="17" viewBox="0 0 17 17"><path d="M1.5 15.5L2.2 11.8L11.8 2.2Q13 1 14.2 2.2L14.8 2.8Q16 4 14.8 5.2L5.2 14.8Z" fill="none" stroke="#222" stroke-width="1.6"/></svg>
<svg class="r" style="left:264.5px;top:543.5px;" width="15" height="15" viewBox="0 0 15 15"><path d="M1 1L14 14M14 1L1 14" stroke="#222" stroke-width="1.8"/></svg>
<svg class="r" style="left:314px;top:543px;" width="15" height="16" viewBox="0 0 15 16"><path d="M7.5 1.5V16M1 8L7.5 1.5L14 8" fill="none" stroke="#222" stroke-width="1.8"/></svg>
<svg class="r" style="left:363.5px;top:543px;" width="15" height="16" viewBox="0 0 15 16"><path d="M7.5 0V14.5M1 8L7.5 14.5L14 8" fill="none" stroke="#222" stroke-width="1.8"/></svg>
<div class="t" style="left:411.50px;top:544.27px;font-size:14.8px;color:#1e1e1e;transform:scaleY(1.13);transform-origin:0 12.53px;">ADD RELATED TABLE</div>
<svg class="r" style="left:594px;top:543px;" width="20" height="16" viewBox="0 0 20 16"><path d="M1.7 0V15.8M18.3 0V15.8" stroke="#222" stroke-width="1.4"/><path d="M5 7.3H15" stroke="#222" stroke-width="1.5"/><path d="M3.2 7.3L6.2 5V9.6Z M16.8 7.3L13.8 5V9.6Z" fill="#222"/></svg>
<svg class="r" style="left:645px;top:542px;" width="18" height="18" viewBox="0 0 18 18"><rect x="0.85" y="0.95" width="15.85" height="15.85" rx="2.2" fill="none" stroke="#222" stroke-width="1.6"/><path d="M3.76 4.11H8.25L13.8 13.37H9.05Z" fill="#222"/><path d="M13.28 4.38L3.76 13.1" stroke="#222" stroke-width="1.3"/><path d="M9.3 4.3H13.8L10.9 7Z M3.5 13.37H8L6.67 10.7Z" fill="#222"/></svg>
<div class="r" style="left:97px;top:572px;width:1513px;height:1px;background:#d9d9d9;"></div>
<div class="r" style="left:97px;top:573px;width:1513px;height:32px;background:#f5f6f8;"></div>
<div class="r" style="left:97px;top:605px;width:1513px;height:1px;background:#dfe6ec;"></div>
<div class="r" style="left:1610px;top:573px;width:18px;height:32px;background:#fff;"></div>
<div class="r" style="left:115px;top:573px;width:1px;height:32px;background:#dedede;"></div>
<div class="r" style="left:143px;top:573px;width:1px;height:32px;background:#dedede;"></div>
<div class="r" style="left:172px;top:573px;width:1px;height:32px;background:#dedede;"></div>
<div class="r" style="left:344px;top:573px;width:1px;height:32px;background:#dedede;"></div>
<div class="r" style="left:864px;top:573px;width:1px;height:32px;background:#dedede;"></div>
<div class="r" style="left:1072px;top:573px;width:1px;height:32px;background:#dedede;"></div>
<svg class="r" style="left:100px;top:580.5px;" width="12" height="14" viewBox="0 0 12 14"><path d="M0.75 0.75H11.25V13.25H0.75Z" fill="none" stroke="#7a7a7a" stroke-width="1.5"/><path d="M0.75 6.8H11.25" stroke="#7a7a7a" stroke-width="1.8"/><path d="M3.5 3.6H8.5M3.5 10.2H8.5" stroke="#9a9a9a" stroke-width="1.1"/></svg>
<svg class="r" style="left:124.5px;top:580.5px;" width="10" height="15" viewBox="0 0 10 15"><path d="M3.6 4.5V10.5Q3.6 12 5 12Q6.4 12 6.4 10.5V3.3Q6.4 0.8 4.6 0.8Q0.8 0.8 0.8 4V10.8Q0.8 14.2 5 14.2Q9.2 14.2 9.2 10.8V4.5" fill="none" stroke="#a0a0a0" stroke-width="1.4"/></svg>
<svg class="r" style="left:151px;top:580px;" width="13" height="15" viewBox="0 0 13 15"><path d="M0.8 0.8H8L12.2 5V14.2H0.8Z" fill="none" stroke="#333" stroke-width="1.5" stroke-linejoin="round"/><path d="M8 0.8V5H12.2" fill="none" stroke="#333" stroke-width="0.9"/></svg>
<div class="t" style="left:229.80px;top:582.54px;font-size:13.3px;color:#6b6b6b;transform:scaleY(1.13);transform-origin:0 11.26px;font-weight:700;">Active</div>
<div class="t" style="left:349.50px;top:582.54px;font-size:13.3px;color:#6b6b6b;transform:scaleY(1.13);transform-origin:0 11.26px;font-weight:700;">Parent Table</div>
<div class="t" style="left:868.50px;top:582.54px;font-size:13.3px;color:#6b6b6b;transform:scaleY(1.13);transform-origin:0 11.26px;font-weight:700;">Join Type</div>
<div class="t" style="left:1076.50px;top:582.54px;font-size:13.3px;color:#6b6b6b;transform:scaleY(1.13);transform-origin:0 11.26px;font-weight:700;">Child Table</div>
<div class="r" style="left:97px;top:606px;width:1513px;height:8px;background:#f6fafd;"></div>
<div class="r" style="left:97px;top:613px;width:1513px;height:1px;background:#e9f1f8;"></div>
<div class="r" style="left:115px;top:614px;width:1495px;height:32.5px;background:#fff;"></div>
<div class="r" style="left:115px;top:645.5px;width:1495px;height:1px;background:#e9f1f8;"></div>
<svg class="r" style="left:126px;top:623.5px;" width="10" height="15" viewBox="0 0 10 15"><path d="M3.6 4.5V10.5Q3.6 12 5 12Q6.4 12 6.4 10.5V3.3Q6.4 0.8 4.6 0.8Q0.8 0.8 0.8 4V10.8Q0.8 14.2 5 14.2Q9.2 14.2 9.2 10.8V4.5" fill="none" stroke="#333" stroke-width="1.4"/></svg>
<svg class="r" style="left:153.5px;top:623.5px;" width="13" height="15" viewBox="0 0 13 15"><path d="M0.8 0.8H8L12.2 5V14.2H0.8Z" fill="none" stroke="#333" stroke-width="1.5" stroke-linejoin="round"/><path d="M8 0.8V5H12.2" fill="none" stroke="#333" stroke-width="0.9"/></svg>
<svg class="r" style="left:251.5px;top:623.5px;" width="14" height="14" viewBox="0 0 14 14"><rect x="0.75" y="0.75" width="12.5" height="12.5" fill="#fff" stroke="#333" stroke-width="1.5"/><path d="M3.2 7L5.8 9.6L10.8 4.2" fill="none" stroke="#222" stroke-width="1.6"/></svg>
<div class="t" style="left:354.30px;top:624.97px;font-size:14.8px;color:#1e1e1e;transform:scaleY(1.13);transform-origin:0 12.53px;">SOOrder</div>
<div class="t" style="left:873.80px;top:624.97px;font-size:14.8px;color:#1e1e1e;transform:scaleY(1.13);transform-origin:0 12.53px;">Inner</div>
<div class="t" style="left:1081.80px;top:624.97px;font-size:14.8px;color:#1e1e1e;transform:scaleY(1.13);transform-origin:0 12.53px;">BAccount</div>
<div class="r" style="left:115px;top:646.5px;width:1495px;height:32.5px;background:#f8fbfe;"></div>
<div class="r" style="left:115px;top:678.0px;width:1495px;height:1px;background:#e9f1f8;"></div>
<svg class="r" style="left:126px;top:656.0px;" width="10" height="15" viewBox="0 0 10 15"><path d="M3.6 4.5V10.5Q3.6 12 5 12Q6.4 12 6.4 10.5V3.3Q6.4 0.8 4.6 0.8Q0.8 0.8 0.8 4V10.8Q0.8 14.2 5 14.2Q9.2 14.2 9.2 10.8V4.5" fill="none" stroke="#333" stroke-width="1.4"/></svg>
<svg class="r" style="left:153.5px;top:656.0px;" width="13" height="15" viewBox="0 0 13 15"><path d="M0.8 0.8H8L12.2 5V14.2H0.8Z" fill="none" stroke="#333" stroke-width="1.5" stroke-linejoin="round"/><path d="M8 0.8V5H12.2" fill="none" stroke="#333" stroke-width="0.9"/></svg>
<svg class="r" style="left:251.5px;top:656.0px;" width="14" height="14" viewBox="0 0 14 14"><rect x="0.75" y="0.75" width="12.5" height="12.5" fill="#fff" stroke="#333" stroke-width="1.5"/><path d="M3.2 7L5.8 9.6L10.8 4.2" fill="none" stroke="#222" stroke-width="1.6"/></svg>
<div class="t" style="left:354.30px;top:657.47px;font-size:14.8px;color:#1e1e1e;transform:scaleY(1.13);transform-origin:0 12.53px;">BAccount</div>
<div class="t" style="left:873.80px;top:657.47px;font-size:14.8px;color:#1e1e1e;transform:scaleY(1.13);transform-origin:0 12.53px;">Inner</div>
<div class="t" style="left:1081.80px;top:657.47px;font-size:14.8px;color:#1e1e1e;transform:scaleY(1.13);transform-origin:0 12.53px;">Customer</div>
<div class="r" style="left:115px;top:679.5px;width:1495px;height:32.5px;background:#fff;"></div>
<div class="r" style="left:115px;top:711.0px;width:1495px;height:1px;background:#e9f1f8;"></div>
<svg class="r" style="left:126px;top:689.0px;" width="10" height="15" viewBox="0 0 10 15"><path d="M3.6 4.5V10.5Q3.6 12 5 12Q6.4 12 6.4 10.5V3.3Q6.4 0.8 4.6 0.8Q0.8 0.8 0.8 4V10.8Q0.8 14.2 5 14.2Q9.2 14.2 9.2 10.8V4.5" fill="none" stroke="#333" stroke-width="1.4"/></svg>
<svg class="r" style="left:153.5px;top:689.0px;" width="13" height="15" viewBox="0 0 13 15"><path d="M0.8 0.8H8L12.2 5V14.2H0.8Z" fill="none" stroke="#333" stroke-width="1.5" stroke-linejoin="round"/><path d="M8 0.8V5H12.2" fill="none" stroke="#333" stroke-width="0.9"/></svg>
<svg class="r" style="left:251.5px;top:689.0px;" width="14" height="14" viewBox="0 0 14 14"><rect x="0.75" y="0.75" width="12.5" height="12.5" fill="#fff" stroke="#333" stroke-width="1.5"/><path d="M3.2 7L5.8 9.6L10.8 4.2" fill="none" stroke="#222" stroke-width="1.6"/></svg>
<div class="t" style="left:354.30px;top:690.47px;font-size:14.8px;color:#1e1e1e;transform:scaleY(1.13);transform-origin:0 12.53px;">SOLine</div>
<div class="t" style="left:873.80px;top:690.47px;font-size:14.8px;color:#1e1e1e;transform:scaleY(1.13);transform-origin:0 12.53px;">Inner</div>
<div class="t" style="left:1081.80px;top:690.47px;font-size:14.8px;color:#1e1e1e;transform:scaleY(1.13);transform-origin:0 12.53px;">InventoryItem</div>
<div class="r" style="left:115px;top:712px;width:1495px;height:32.5px;background:#e3f0fa;"></div>
<div class="r" style="left:1072px;top:712px;width:538px;height:32.5px;background:#cce3f4;"></div>
<div class="r" style="left:115px;top:743.5px;width:1495px;height:1px;background:#e9f1f8;"></div>
<svg class="r" style="left:126px;top:721.5px;" width="10" height="15" viewBox="0 0 10 15"><path d="M3.6 4.5V10.5Q3.6 12 5 12Q6.4 12 6.4 10.5V3.3Q6.4 0.8 4.6 0.8Q0.8 0.8 0.8 4V10.8Q0.8 14.2 5 14.2Q9.2 14.2 9.2 10.8V4.5" fill="none" stroke="#333" stroke-width="1.4"/></svg>
<svg class="r" style="left:153.5px;top:721.5px;" width="13" height="15" viewBox="0 0 13 15"><path d="M0.8 0.8H8L12.2 5V14.2H0.8Z" fill="none" stroke="#333" stroke-width="1.5" stroke-linejoin="round"/><path d="M8 0.8V5H12.2" fill="none" stroke="#333" stroke-width="0.9"/></svg>
<svg class="r" style="left:251.5px;top:721.5px;" width="14" height="14" viewBox="0 0 14 14"><rect x="0.75" y="0.75" width="12.5" height="12.5" fill="#fff" stroke="#333" stroke-width="1.5"/><path d="M3.2 7L5.8 9.6L10.8 4.2" fill="none" stroke="#222" stroke-width="1.6"/></svg>
<div class="t" style="left:354.30px;top:722.97px;font-size:14.8px;color:#1e1e1e;transform:scaleY(1.13);transform-origin:0 12.53px;">SOOrder</div>
<div class="t" style="left:873.80px;top:722.97px;font-size:14.8px;color:#1e1e1e;transform:scaleY(1.13);transform-origin:0 12.53px;">Left</div>
<div class="t" style="left:1081.80px;top:722.97px;font-size:14.8px;color:#1e1e1e;transform:scaleY(1.13);transform-origin:0 12.53px;">SOLine2</div>
<div class="r" style="left:96.5px;top:606px;width:18.5px;height:139px;background:#f5f6f8;"></div>
<div class="r" style="left:97px;top:646.0px;width:18px;height:1px;background:#e6e6e6;"></div>
<div class="r" style="left:97px;top:678.6px;width:18px;height:1px;background:#e6e6e6;"></div>
<div class="r" style="left:97px;top:711.2px;width:18px;height:1px;background:#e6e6e6;"></div>
<div class="r" style="left:97px;top:743.8px;width:18px;height:1px;background:#e6e6e6;"></div>
<svg class="r" style="left:102px;top:721px;" width="8" height="13" viewBox="0 0 8 13"><path d="M1 1L6.5 6.5L1 12" fill="none" stroke="#555" stroke-width="1.6"/></svg>
<div class="r" style="left:1610px;top:605px;width:18px;height:140px;background:#f0f0f0;"></div>
<div class="r" style="left:1611px;top:654px;width:16px;height:72px;background:#c1c1c1;"></div>
<svg class="r" style="left:1614px;top:612px;" width="10" height="6" viewBox="0 0 10 6"><path d="M0 6L5 0L10 6Z" fill="#505050"/></svg>
<svg class="r" style="left:1614px;top:732px;" width="10" height="6" viewBox="0 0 10 6"><path d="M0 0L5 6L10 0Z" fill="#a0a0a0"/></svg>
<div class="r" style="left:97px;top:745px;width:1513px;height:18px;background:#f0f0f0;"></div>
<div class="r" style="left:117px;top:747px;width:1473px;height:15px;background:#c1c1c1;"></div>
<svg class="r" style="left:103px;top:750px;" width="6" height="10" viewBox="0 0 6 10"><path d="M6 0L0 5L6 10Z" fill="#a0a0a0"/></svg>
<svg class="r" style="left:1598px;top:750px;" width="6" height="10" viewBox="0 0 6 10"><path d="M0 0L6 5L0 10Z" fill="#505050"/></svg>
<div class="r" style="left:1610px;top:745px;width:18px;height:18px;background:#dcdcdc;"></div>
<div class="r" style="left:97px;top:763px;width:1531px;height:1px;background:#e4e4e4;"></div>
<div class="r" style="left:97px;top:794px;width:1531px;height:1px;background:#dfe0e4;"></div>
<div class="t" style="left:104.50px;top:807.86px;font-size:14.7px;color:#1e1e1e;transform:scaleY(1.13);transform-origin:0 12.44px;font-weight:700;">Data Field Links For Active Relation</div>
<svg class="r" style="left:114.5px;top:840px;" width="17" height="17" viewBox="0 0 17 17"><path d="M11.9 4.2A6.8 6.8 0 1 1 8.3 2.7" fill="none" stroke="#222" stroke-width="1.7"/><path d="M6.6 0.3L9.3 2.8L6.8 5.5" fill="none" stroke="#222" stroke-width="1.6"/></svg>
<svg class="r" style="left:163.5px;top:840px;" width="17" height="17" viewBox="0 0 17 17"><path d="M8.5 0.5V16.5M0.5 8.5H16.5" stroke="#222" stroke-width="1.9"/></svg>
<svg class="r" style="left:214.5px;top:841.5px;" width="15" height="15" viewBox="0 0 15 15"><path d="M1 1L14 14M14 1L1 14" stroke="#222" stroke-width="1.8"/></svg>
<svg class="r" style="left:264px;top:841px;" width="15" height="16" viewBox="0 0 15 16"><path d="M7.5 1.5V16M1 8L7.5 1.5L14 8" fill="none" stroke="#222" stroke-width="1.8"/></svg>
<svg class="r" style="left:317.5px;top:841px;" width="15" height="16" viewBox="0 0 15 16"><path d="M7.5 0V14.5M1 8L7.5 14.5L14 8" fill="none" stroke="#222" stroke-width="1.8"/></svg>
<div class="t" style="left:370.00px;top:842.77px;font-size:14.8px;color:#1e1e1e;transform:scaleY(1.13);transform-origin:0 12.53px;">ADD RELATIONS</div>
<svg class="r" style="left:518.3px;top:841.2px;" width="20" height="16" viewBox="0 0 20 16"><path d="M1.7 0V15.8M18.3 0V15.8" stroke="#222" stroke-width="1.4"/><path d="M5 7.3H15" stroke="#222" stroke-width="1.5"/><path d="M3.2 7.3L6.2 5V9.6Z M16.8 7.3L13.8 5V9.6Z" fill="#222"/></svg>
<svg class="r" style="left:570px;top:840.3px;" width="18" height="18" viewBox="0 0 18 18"><rect x="0.85" y="0.95" width="15.85" height="15.85" rx="2.2" fill="none" stroke="#222" stroke-width="1.6"/><path d="M3.76 4.11H8.25L13.8 13.37H9.05Z" fill="#222"/><path d="M13.28 4.38L3.76 13.1" stroke="#222" stroke-width="1.3"/><path d="M9.3 4.3H13.8L10.9 7Z M3.5 13.37H8L6.67 10.7Z" fill="#222"/></svg>
<div class="r" style="left:97px;top:870px;width:1531px;height:1px;background:#d9d9d9;"></div>
<div class="r" style="left:97px;top:871px;width:1531px;height:32px;background:#f5f6f8;"></div>
<div class="r" style="left:97px;top:903px;width:1531px;height:1px;background:#dfe6ec;"></div>
<div class="r" style="left:115px;top:871px;width:1px;height:32px;background:#dedede;"></div>
<div class="r" style="left:143px;top:871px;width:1px;height:32px;background:#dedede;"></div>
<div class="r" style="left:172px;top:871px;width:1px;height:32px;background:#dedede;"></div>
<div class="r" style="left:376px;top:871px;width:1px;height:32px;background:#dedede;"></div>
<div class="r" style="left:683px;top:871px;width:1px;height:32px;background:#dedede;"></div>
<div class="r" style="left:1015px;top:871px;width:1px;height:32px;background:#dedede;"></div>
<div class="r" style="left:1322px;top:871px;width:1px;height:32px;background:#dedede;"></div>
<div class="r" style="left:1527px;top:871px;width:1px;height:32px;background:#dedede;"></div>
<svg class="r" style="left:100px;top:879.5px;" width="12" height="14" viewBox="0 0 12 14"><path d="M0.75 0.75H11.25V13.25H0.75Z" fill="none" stroke="#7a7a7a" stroke-width="1.5"/><path d="M0.75 6.8H11.25" stroke="#7a7a7a" stroke-width="1.8"/><path d="M3.5 3.6H8.5M3.5 10.2H8.5" stroke="#9a9a9a" stroke-width="1.1"/></svg>
<svg class="r" style="left:124.5px;top:879px;" width="10" height="15" viewBox="0 0 10 15"><path d="M3.6 4.5V10.5Q3.6 12 5 12Q6.4 12 6.4 10.5V3.3Q6.4 0.8 4.6 0.8Q0.8 0.8 0.8 4V10.8Q0.8 14.2 5 14.2Q9.2 14.2 9.2 10.8V4.5" fill="none" stroke="#a0a0a0" stroke-width="1.4"/></svg>
<svg class="r" style="left:151px;top:878.5px;" width="13" height="15" viewBox="0 0 13 15"><path d="M0.8 0.8H8L12.2 5V14.2H0.8Z" fill="none" stroke="#333" stroke-width="1.5" stroke-linejoin="round"/><path d="M8 0.8V5H12.2" fill="none" stroke="#333" stroke-width="0.9"/></svg>
<div class="t" style="left:177.00px;top:880.24px;font-size:13.3px;color:#6b6b6b;transform:scaleY(1.13);transform-origin:0 11.26px;font-weight:700;">Brackets</div>
<div class="t" style="left:381.30px;top:880.24px;font-size:13.3px;color:#6b6b6b;transform:scaleY(1.13);transform-origin:0 11.26px;font-weight:700;">Parent Field</div>
<div class="t" style="left:687.70px;top:880.24px;font-size:13.3px;color:#6b6b6b;transform:scaleY(1.13);transform-origin:0 11.26px;font-weight:700;">Condition</div>
<div class="t" style="left:1020.20px;top:880.24px;font-size:13.3px;color:#6b6b6b;transform:scaleY(1.13);transform-origin:0 11.26px;font-weight:700;">Child Field</div>
<div class="t" style="left:1326.70px;top:880.24px;font-size:13.3px;color:#6b6b6b;transform:scaleY(1.13);transform-origin:0 11.26px;font-weight:700;">Brackets</div>
<div class="t" style="left:1531.50px;top:880.24px;font-size:13.3px;color:#6b6b6b;transform:scaleY(1.13);transform-origin:0 11.26px;font-weight:700;">Operator</div>
<div class="r" style="left:97px;top:904px;width:1531px;height:79px;background:#fff;"></div>
<div class="r" style="left:115px;top:903.5px;width:1513px;height:32.5px;background:#fff;"></div>
<div class="r" style="left:115px;top:935.0px;width:1513px;height:1px;background:#e9f1f8;"></div>
<svg class="r" style="left:126px;top:912.5px;" width="10" height="15" viewBox="0 0 10 15"><path d="M3.6 4.5V10.5Q3.6 12 5 12Q6.4 12 6.4 10.5V3.3Q6.4 0.8 4.6 0.8Q0.8 0.8 0.8 4V10.8Q0.8 14.2 5 14.2Q9.2 14.2 9.2 10.8V4.5" fill="none" stroke="#333" stroke-width="1.4"/></svg>
<svg class="r" style="left:153.5px;top:912.5px;" width="13" height="15" viewBox="0 0 13 15"><path d="M0.8 0.8H8L12.2 5V14.2H0.8Z" fill="none" stroke="#333" stroke-width="1.5" stroke-linejoin="round"/><path d="M8 0.8V5H12.2" fill="none" stroke="#333" stroke-width="0.9"/></svg>
<div class="t" style="left:385.80px;top:913.87px;font-size:14.8px;color:#1e1e1e;transform:scaleY(1.13);transform-origin:0 12.53px;">orderType</div>
<div class="t" style="left:692.30px;top:913.87px;font-size:14.8px;color:#1e1e1e;transform:scaleY(1.13);transform-origin:0 12.53px;">Equals</div>
<div class="t" style="left:1024.70px;top:913.87px;font-size:14.8px;color:#1e1e1e;transform:scaleY(1.13);transform-origin:0 12.53px;">orderType</div>
<div class="t" style="left:1536.50px;top:913.87px;font-size:14.8px;color:#1e1e1e;transform:scaleY(1.13);transform-origin:0 12.53px;">And</div>
<div class="r" style="left:115px;top:936px;width:1513px;height:32.5px;background:#e3f0fa;"></div>
<div class="r" style="left:1016px;top:936px;width:306px;height:32.5px;background:#cce3f4;"></div>
<div class="r" style="left:115px;top:967.5px;width:1513px;height:1px;background:#dde3e8;"></div>
<svg class="r" style="left:126px;top:945px;" width="10" height="15" viewBox="0 0 10 15"><path d="M3.6 4.5V10.5Q3.6 12 5 12Q6.4 12 6.4 10.5V3.3Q6.4 0.8 4.6 0.8Q0.8 0.8 0.8 4V10.8Q0.8 14.2 5 14.2Q9.2 14.2 9.2 10.8V4.5" fill="none" stroke="#333" stroke-width="1.4"/></svg>
<svg class="r" style="left:153.5px;top:945px;" width="13" height="15" viewBox="0 0 13 15"><path d="M0.8 0.8H8L12.2 5V14.2H0.8Z" fill="none" stroke="#333" stroke-width="1.5" stroke-linejoin="round"/><path d="M8 0.8V5H12.2" fill="none" stroke="#333" stroke-width="0.9"/></svg>
<div class="t" style="left:385.80px;top:946.37px;font-size:14.8px;color:#1e1e1e;transform:scaleY(1.13);transform-origin:0 12.53px;">orderNbr</div>
<div class="t" style="left:692.30px;top:946.37px;font-size:14.8px;color:#1e1e1e;transform:scaleY(1.13);transform-origin:0 12.53px;">Equals</div>
<div class="t" style="left:1024.70px;top:946.37px;font-size:14.8px;color:#1e1e1e;transform:scaleY(1.13);transform-origin:0 12.53px;">orderNbr</div>
<div class="t" style="left:1536.50px;top:946.37px;font-size:14.8px;color:#1e1e1e;transform:scaleY(1.13);transform-origin:0 12.53px;">And</div>
<div class="r" style="left:96.5px;top:904px;width:18.5px;height:64px;background:#f5f6f8;"></div>
<div class="r" style="left:97px;top:935px;width:18px;height:1px;background:#e6e6e6;"></div>
<div class="r" style="left:97px;top:967px;width:18px;height:1px;background:#dde3e8;"></div>
<svg class="r" style="left:102px;top:945px;" width="8" height="13" viewBox="0 0 8 13"><path d="M1 1L6.5 6.5L1 12" fill="none" stroke="#555" stroke-width="1.6"/></svg>
<div class="r" style="left:0px;top:983px;width:1701px;height:33px;background:#007acf;"></div>
<svg class="r" style="left:17px;top:989px;" width="20" height="18" viewBox="0 0 20 18"><path d="M1 1H19V13H11L8.5 16.5L7 13H1Z" fill="none" stroke="#fff" stroke-width="1.6" stroke-linejoin="round"/><path d="M4.5 4.8H15.5M4.5 7.5H15.5M4.5 10.2H12" stroke="#fff" stroke-width="1.3"/></svg>
<div class="t" style="left:47.50px;top:993.06px;font-size:14.7px;color:#fff;transform:scaleY(1.13);transform-origin:0 12.44px;font-weight:700;">Your product is in trial mode. Only two concurrent users are allowed.</div>
<div class="t" style="left:1584.30px;top:993.06px;font-size:14.7px;color:#fff;transform:scaleY(1.13);transform-origin:0 12.44px;font-weight:700;">ACTIVATE</div>
<div class="r" style="left:0px;top:1016px;width:1701px;height:64px;background:#fff;"></div>
<svg class="r" style="left:24px;top:1038px;" width="16" height="19" viewBox="0 0 16 19"><path d="M0.75 0.75H10.5L14.75 5V18.25H0.75Z" fill="#fff" stroke="#777" stroke-width="1.4" stroke-linejoin="round"/><path d="M10.5 0.75V5H14.75" fill="none" stroke="#777" stroke-width="1.1"/></svg>
<div class="t" style="left:55.50px;top:1042.55px;font-size:14px;color:#3c4043;transform:scaleY(1.13);transform-origin:0 11.85px;">K2 CO Retail Tax T....xml</div>
<svg class="r" style="left:235.5px;top:1045px;" width="11" height="7" viewBox="0 0 11 7"><path d="M0.8 6.2L5.5 1.2L10.2 6.2" fill="none" stroke="#3c4043" stroke-width="1.6"/></svg>
<div class="r" style="left:267px;top:1024px;width:1px;height:50px;background:#c7c7c7;"></div>
<div class="r" style="left:1573px;top:1029px;width:86px;height:35px;border:1px solid #dadce0;border-radius:4px;background:#fff"></div>
<div class="t" style="left:1590.00px;top:1041.45px;font-size:14px;color:#1a73e8;transform:scaleY(1.13);transform-origin:0 11.85px;">Show all</div>
<svg class="r" style="left:1675px;top:1042px;" width="12" height="12" viewBox="0 0 12 12"><path d="M1 1L11 11M11 1L1 11" stroke="#5f6368" stroke-width="1.8"/></svg>
</body></html>
